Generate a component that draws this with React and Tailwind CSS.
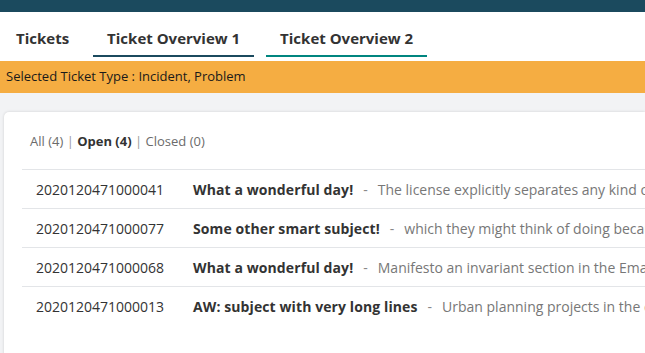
import { Fragment } from "react";

const tickets = [
  {
    id: "2020120471000041",
    subject: "What a wonderful day!",
    text: "The license explicitly separates any kind of distribution from the work itself",
  },
  {
    id: "2020120471000077",
    subject: "Some other smart subject!",
    text: "which they might think of doing because of the terms of the license",
  },
  {
    id: "2020120471000068",
    subject: "What a wonderful day!",
    text: "Manifesto an invariant section in the Emacs manual and its documentation",
  },
  {
    id: "2020120471000013",
    subject: "AW: subject with very long lines",
    text: "Urban planning projects in the city center and surrounding areas",
  },
];

const tabs = [
  { label: "Tickets", line: "" },
  { label: "Ticket Overview 1", line: "border-[#1b4a5e]" },
  { label: "Ticket Overview 2", line: "border-[#00857f]" },
];

export default function App() {
  return (
    <div className="w-[645px] h-[353px] overflow-hidden bg-[#f2f3f5] font-['Open_Sans',sans-serif] text-[#333]">
      <div className="h-3 bg-[#1b4a5e]" />

      <div className="flex items-end h-[49px] bg-white pl-[4px] pb-[4px]">
        {tabs.map((t) => (
          <div
            key={t.label}
            className={`mr-3 px-3 pb-[7px] border-b-2 text-[15px] font-bold leading-5 ${
              t.line ? t.line + " w-[161px] text-center" : "border-transparent"
            }`}
          >
            {t.label}
          </div>
        ))}
      </div>

      <div className="h-8 bg-[#f5ad42] flex items-center px-[6px] text-[13px] text-[#1a1a1a]">
        Selected Ticket Type : Incident, Problem
      </div>

      <div className="pt-[19px] pl-[4px]">
        <div className="bg-white rounded-tl-[5px] shadow-[0_0_3px_rgba(0,0,0,0.15)] h-[300px] pl-[18px] pt-[20px]">
          <div className="pl-[8px] text-[13px] text-[#6b6b6b] h-[37px] whitespace-pre">
            {"All (4) "}
            <span className="text-[#999]">|</span>{" "}
            <span className="font-bold text-[#333]">Open (4)</span>{" "}
            <span className="text-[#999]">|</span>{" Closed (0)"}
          </div>
          <div className="border-t border-[#e3e5e8]">
            {tickets.map((t, i) => (
              <div
                key={t.id}
                className={`flex items-center h-[39px] pl-[14px] whitespace-nowrap text-[14px] ${
                  i < tickets.length - 1 ? "border-b border-[#e3e5e8]" : ""
                }`}
              >
                <span className="w-[157px] shrink-0 text-[#333]">{t.id}</span>
                <span className="font-bold text-[#333] tracking-[0.1px]">{t.subject}</span>
                <span className="text-[#888] mx-[10px]">-</span>
                <span className="text-[#777]">{t.text}</span>
              </div>
            ))}
          </div>
        </div>
      </div>
    </div>
  );
}
